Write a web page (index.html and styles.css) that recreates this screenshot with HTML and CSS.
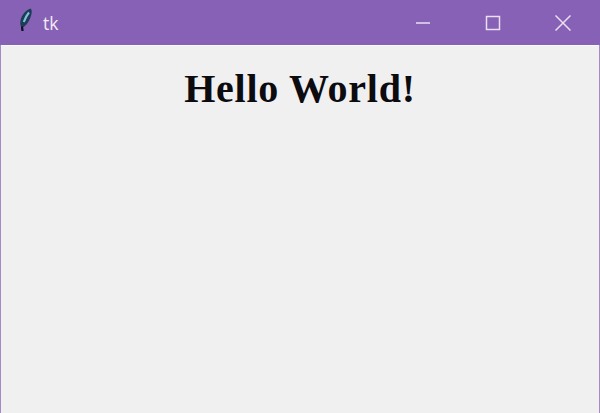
FILE: index.html
```html
<!DOCTYPE html>
<html lang="en">
<head>
<meta charset="utf-8">
<title>tk</title>
<link rel="stylesheet" href="styles.css">
</head>
<body>
<div class="window">
  <header class="titlebar">
    <div class="title-left">
      <svg class="feather" width="16" height="26" viewBox="0 0 16 26">
        <path d="M12.500 .5C8 2 3.500 7 2.500 12.500c-.5 2.500-.3 4.500 .5 6l1.500 1C8.500 18 12 12 13.500 6c.5-2.500 .2-5-1-5.500z" fill="#1d3c58"/>
        <path d="M11 4.500C8.500 7.500 7 10.500 5.800 14" stroke="#7fc0d6" stroke-width="2.200" fill="none"/>
        <path d="M4 18.500L4.500 23" stroke="#0d0d1a" stroke-width="2.200" fill="none"/>
      </svg>
      <span class="title-text">tk</span>
    </div>
    <div class="controls">
      <div class="control">
        <svg width="16" height="16" viewBox="0 0 16 16"><path d="M1 8h14" class="glyph"/></svg>
      </div>
      <div class="control">
        <svg width="16" height="16" viewBox="0 0 16 16"><rect x="1.500" y="1.500" width="13" height="13" class="glyph"/></svg>
      </div>
      <div class="control">
        <svg width="16" height="16" viewBox="0 0 16 16"><path d="M.5 .5l15 15M15.500 .5l-15 15" class="glyph"/></svg>
      </div>
    </div>
  </header>
  <main class="content">
    <h1 class="heading">Hello World!</h1>
  </main>
</div>
</body>
</html>
```
FILE: styles.css
```css
html, body {
  margin: 0;
  padding: 0;
  height: 100%;
  overflow: hidden;
}
.window {
  box-sizing: border-box;
  width: 600px;
  height: 413px;
  display: flex;
  flex-direction: column;
  background: #f0f0f0;
  border-left: 1px solid #a58ac6;
  border-right: 1px solid #a58ac6;
}
.titlebar {
  height: 45px;
  margin: 0 -1px;
  flex: none;
  display: flex;
  justify-content: space-between;
  align-items: center;
  background: #8761b5;
  color: #f3ecf8;
}
.title-left {
  display: flex;
  align-items: center;
  gap: 9px;
  padding-left: 18px;
}
.feather {
  display: block;
  margin-bottom: 3px;
}
.title-text {
  font: 17.500px "Open Sans", sans-serif;
}
.controls {
  display: flex;
  padding-right: 2px;
}
.control {
  width: 70px;
  height: 45px;
  display: flex;
  justify-content: center;
  align-items: center;
}
.glyph {
  fill: none;
  stroke: #eadff3;
  stroke-width: 1.500;
}
.content {
  flex: 1;
  text-align: center;
  border-top: 1px solid #f8f8f8;
}
.heading {
  margin: 20px 0 0;
  font: bold 40px/46px "Liberation Serif", serif;
  letter-spacing: 0.750px;
  color: #0b0b10;
}
```
